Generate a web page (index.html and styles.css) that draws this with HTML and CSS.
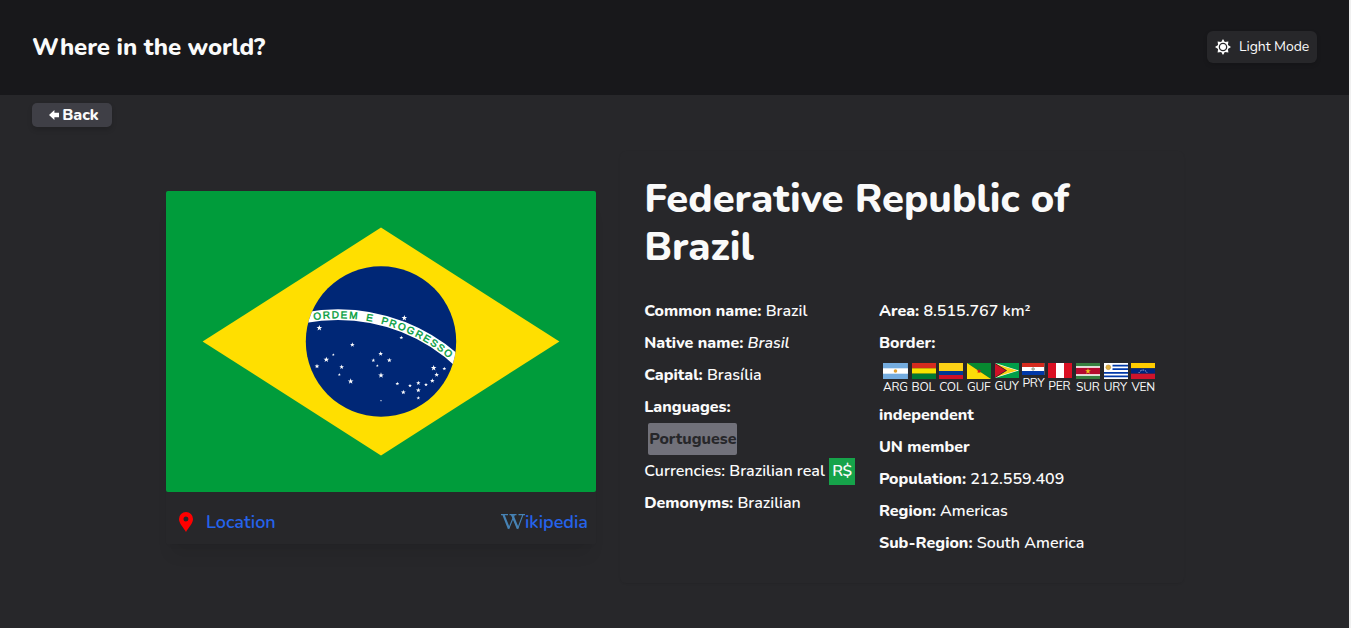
FILE: index.html
```html
<!DOCTYPE html>
<html lang="en">
<head>
<meta charset="utf-8">
<title>Where in the world?</title>
<link rel="stylesheet" href="styles.css">
</head>
<body>
<div class="page">
  <header class="header">
    <h1 class="brand">Where in the world?</h1>
    <button class="mode">
      <svg class="sun" viewBox="0 0 16 16"><path fill="#fff" fill-rule="evenodd" d="M8 0l1.800 2.900L13.400 2.400l-.5 3.700L16 8l-3.100 1.900.5 3.700-3.600-.5L8 16l-1.800-2.900-3.600.5.500-3.700L0 8l3.100-1.900-.5-3.700 3.600.5zM8 3.700a4.300 4.300 0 1 0 0 8.600 4.300 4.300 0 0 0 0-8.600z"/><circle cx="8" cy="8" r="3" fill="#fff"/></svg>
      Light Mode
    </button>
  </header>
  <main class="main">
    <a class="back"><svg class="arrow" viewBox="0 0 10 10"><path fill="#fff" d="M0 5L5.400 0v2.800H10v4.400H5.400V10z"/></svg>Back</a>
    <div class="content">
      <section class="flag-card">
        <svg class="flag" viewBox="0 0 430 301">
          <defs>
            <path id="star" d="M0-1L.24-.31.95-.31.38.12.59.81 0 .4-.59.81-.38.12-.95-.31-.24-.31z"/>
            <clipPath id="globe"><circle cx="215" cy="150.500" r="75.200"/></clipPath>
            <path id="motto" d="M-1.800 301A173.800 173.800 0 0 1 345.800 301"/>
          </defs>
          <rect width="430" height="301" fill="#009c3b"/>
          <path fill="#ffdf00" d="M36.600 150.500L215 36.600l178.400 113.900L215 264.400z"/>
          <circle cx="215" cy="150.500" r="75.200" fill="#002776"/>
          <circle cx="172" cy="301" r="177.400" fill="none" stroke="#fff" stroke-width="10.700" clip-path="url(#globe)"/>
          <text class="motto"><textPath href="#motto" startOffset="248.400" textLength="145">ORDEM E PROGRESSO</textPath></text>
          <g fill="#fff" transform="translate(124 59) scale(.33333)">
            <use href="#star" transform="translate(88 234) scale(9)"/><use href="#star" transform="translate(343 204) scale(9)"/>
            <use href="#star" transform="translate(334 263) scale(6)"/><use href="#star" transform="translate(187 284) scale(7.500)"/>
            <use href="#star" transform="translate(130 314) scale(4.500)"/><use href="#star" transform="translate(109 329) scale(9)"/>
            <use href="#star" transform="translate(81 349) scale(7.500)"/><use href="#star" transform="translate(155 351) scale(7.500)"/>
            <use href="#star" transform="translate(148 374) scale(5)"/><use href="#star" transform="translate(182 394) scale(9)"/>
            <use href="#star" transform="translate(272 311) scale(7.500)"/><use href="#star" transform="translate(250 331) scale(6)"/>
            <use href="#star" transform="translate(298 331) scale(7.500)"/><use href="#star" transform="translate(262 347) scale(4.500)"/>
            <use href="#star" transform="translate(273 376) scale(9)"/><use href="#star" transform="translate(322 401) scale(6)"/>
            <use href="#star" transform="translate(360 407) scale(6)"/><use href="#star" transform="translate(340 427) scale(7.500)"/>
            <use href="#star" transform="translate(385 399) scale(7)"/><use href="#star" transform="translate(385 421) scale(7.500)"/>
            <use href="#star" transform="translate(385 444) scale(6)"/><use href="#star" transform="translate(408 404) scale(6)"/>
            <use href="#star" transform="translate(427 392) scale(7.500)"/><use href="#star" transform="translate(440 374) scale(7.500)"/>
            <use href="#star" transform="translate(431 354) scale(9)"/><use href="#star" transform="translate(463 356) scale(6)"/>
            <use href="#star" transform="translate(273 452) scale(3)"/>
          </g>
        </svg>
        <div class="links">
          <a class="link"><svg class="pin" viewBox="0 0 14 20"><path fill="red" fill-rule="evenodd" d="M7 0a7 7 0 0 1 7 7c0 4.600-4.500 8.300-7 13C4.500 15.300 0 11.600 0 7a7 7 0 0 1 7-7zm0 4.500a2.500 2.500 0 1 0 0 5 2.500 2.500 0 0 0 0-5z"/></svg>Location</a>
          <a class="link"><svg class="wiki" viewBox="0 0 24 16"><path fill="none" stroke="#4682b4" stroke-width="1.100" d="M0 .6h7M8.500.6h7M17.500.6H24M10.600 1l6 13M21.800 1L16.600 15M13.300 1L7.600 15"/><path fill="none" stroke="#4682b4" stroke-width="2.200" d="M2.500.8l5.400 13.700M11.300.8l5.500 13.700"/></svg>ikipedia</a>
        </div>
      </section>
      <section class="info">
        <h2 class="name">Federative Republic of Brazil</h2>
        <div class="columns">
          <ul class="list">
            <li><b>Common name:</b> Brazil</li>
            <li><b>Native name:</b> <i>Brasil</i></li>
            <li><b>Capital:</b> Brasília</li>
            <li><b>Languages:</b></li>
            <li><span class="language">Portuguese</span></li>
            <li>Currencies: Brazilian real <span class="symbol">R$</span></li>
            <li><b>Demonyms:</b> Brazilian</li>
          </ul>
          <ul class="list">
            <li><b>Area:</b> 8.515.767 km²</li>
            <li><b>Border:</b></li>
            <li class="borders">
              <a class="border"><svg viewBox="0 0 24 16" preserveAspectRatio="none"><path fill="#74acdf" d="M0 0h24v16H0z"/><path fill="#fff" d="M0 5.300h24v5.400H0z"/><circle cx="12" cy="8" r="1.700" fill="#e0a030"/></svg>ARG</a>
              <a class="border"><svg viewBox="0 0 24 16" preserveAspectRatio="none"><path fill="#d52b1e" d="M0 0h24v5.300H0z"/><path fill="#f9e300" d="M0 5.300h24v5.400H0z"/><path fill="#007934" d="M0 10.700h24V16H0z"/></svg>BOL</a>
              <a class="border"><svg viewBox="0 0 24 16" preserveAspectRatio="none"><path fill="#fcd116" d="M0 0h24v8H0z"/><path fill="#003893" d="M0 8h24v4H0z"/><path fill="#ce1126" d="M0 12h24v4H0z"/></svg>COL</a>
              <a class="border"><svg viewBox="0 0 24 16" preserveAspectRatio="none"><path fill="#078930" d="M0 0h24v16z"/><path fill="#fcdd09" d="M0 0v16h24z"/><use href="#star" fill="#da121a" transform="translate(12 8.200) scale(2.600)"/></svg>GUF</a>
              <a class="border"><svg class="h15" viewBox="0 0 24 15" preserveAspectRatio="none"><path fill="#009e49" d="M0 0h24v15H0z"/><path fill="#fff" d="M0 0l24 7.500L0 15z"/><path fill="#fcd116" d="M0 .7l22 6.800L0 14.300z"/><path fill="#222" d="M0 0l12 7.500L0 15z"/><path fill="#ce1126" d="M0 .8l10.800 6.700L0 14.200z"/></svg>GUY</a>
              <a class="border"><svg class="h12" viewBox="0 0 22 12" preserveAspectRatio="none"><path fill="#fff" d="M0 0h22v12H0z"/><path fill="#d52b1e" d="M0 0h22v4H0z"/><path fill="#0038a8" d="M0 8h22v4H0z"/><circle cx="11" cy="6" r="1.300" fill="#c8c8b8" stroke="#77806a" stroke-width=".6"/></svg>PRY</a>
              <a class="border"><svg class="h15" viewBox="0 0 24 15" preserveAspectRatio="none"><path fill="#d91023" d="M0 0h24v15H0z"/><path fill="#fff" d="M8 0h8v15H8z"/></svg>PER</a>
              <a class="border"><svg viewBox="0 0 24 16" preserveAspectRatio="none"><path fill="#377e3f" d="M0 0h24v16H0z"/><path fill="#fff" d="M0 3.200h24v9.600H0z"/><path fill="#b40a2d" d="M0 4.800h24v6.400H0z"/><use href="#star" fill="#ecc81d" transform="translate(12 8.200) scale(3)"/></svg>SUR</a>
              <a class="border"><svg viewBox="0 0 24 16" preserveAspectRatio="none"><path fill="#fff" d="M0 0h24v16H0z"/><path stroke="#0038a8" stroke-width="1.700" d="M8.500 2.600H24M8.500 6.200H24M0 9.800h24M0 13.300h24"/><circle cx="4.300" cy="4.300" r="2.400" fill="#e0b040" stroke="#b08030" stroke-width=".5"/></svg>URY</a>
              <a class="border"><svg viewBox="0 0 24 16" preserveAspectRatio="none"><path fill="#fc0" d="M0 0h24v5.300H0z"/><path fill="#00247d" d="M0 5.300h24v5.400H0z"/><path fill="#cf142b" d="M0 10.700h24V16H0z"/><path fill="none" stroke="#fff" stroke-width=".9" stroke-dasharray=".8 1" d="M8 9.800a4.300 4.300 0 0 1 8 0"/></svg>VEN</a>
            </li>
            <li><b>independent</b></li>
            <li><b>UN member</b></li>
            <li><b>Population:</b> 212.559.409</li>
            <li><b>Region:</b> Americas</li>
            <li><b>Sub-Region:</b> South America</li>
          </ul>
        </div>
      </section>
    </div>
  </main>
</div>
</body>
</html>
```
FILE: styles.css
```css
* { box-sizing: border-box; }
html, body { margin: 0; height: 628px; overflow: hidden; }
body { background: #f0f0f0; color: #fafafa; font: 600 16px/24px Nunito, "Open Sans", sans-serif; }
h1, h2, ul { margin: 0; padding: 0; }
b { font-weight: 800; }
svg { display: block; }
.page { width: 1349px; height: 628px; background: #27272a; }
.header { display: flex; justify-content: space-between; align-items: center; height: 95px; padding: 0 32px 1px; background: #18181b; }
.brand { font-size: 24px; line-height: 32px; font-weight: 800; letter-spacing: -.08px; }
.mode { display: flex; align-items: center; gap: 8px; width: 110px; height: 32px; padding: 0 8px; border: 0; border-radius: 6px; background: #27272a; color: #fafafa; font: 400 14px/20px Nunito, "Open Sans", sans-serif; letter-spacing: -.08px; white-space: nowrap; box-shadow: 0 2px 4px rgba(0,0,0,.15); }
.sun { flex: none; width: 16px; height: 16px; }
.main { padding: 8px 32px 0; }
.back { display: flex; justify-content: center; align-items: center; gap: 3px; width: 80px; height: 24px; padding-left: 4px; border-radius: 5px; background: #3f3f46; font-weight: 800; box-shadow: 0 3px 5px rgba(0,0,0,.15); }
.arrow { width: 10px; height: 10px; }
.content { display: flex; align-items: center; gap: 24px; padding: 24px 0 0 134px; }
.flag-card { width: 430px; height: 353px; margin-top: 1px; border-radius: 2px; box-shadow: 0 16px 15px -6px rgba(0,0,0,.08), 0 4px 6px -4px rgba(0,0,0,.08); }
.flag { width: 430px; height: 301px; border-radius: 2px; }
.motto { font: 10px "Liberation Sans", Arial, sans-serif; word-spacing: 2.500px; fill: #009c3b; stroke: #009c3b; stroke-width: .4px; }
.links { display: flex; justify-content: space-between; padding: 16px 8px 0 13px; }
.link { display: flex; align-items: center; height: 28px; color: #2563eb; font-size: 18px; line-height: 28px; }
.pin { width: 14px; height: 20px; margin-right: 13px; }
.wiki { width: 24px; height: 16px; }
.info { width: 564px; height: 432px; padding: 24px 24px 24px 24.200px; border-radius: 6px; box-shadow: 0 1px 2px rgba(0,0,0,.08); }
.name { width: 450px; font-size: 40px; line-height: 48px; font-weight: 800; }
.columns { display: grid; grid-template-columns: 210.700px auto; column-gap: 24px; padding-top: 24px; }
.list { list-style: none; white-space: nowrap; }
.list li { height: 32px; line-height: 32px; }
.language { display: inline-block; width: 89px; height: 32px; margin-left: 4px; padding: 0 1px; border-radius: 2px; background: #71717a; color: #27272a; font-weight: 800; }
.symbol { display: inline-block; width: 26px; height: 27px; line-height: 27px; text-align: center; letter-spacing: -.4px; background: #16a34a; }
.list .borders { display: flex; gap: 3.700px; height: 40px; padding: 4px 0 0 4px; }
.border { font-size: 12px; line-height: 16px; font-weight: 400; letter-spacing: -.16px; }
.border svg { width: 100%; height: 16px; }
.border .h15 { height: 15px; }
.border .h12 { height: 12px; }
```
